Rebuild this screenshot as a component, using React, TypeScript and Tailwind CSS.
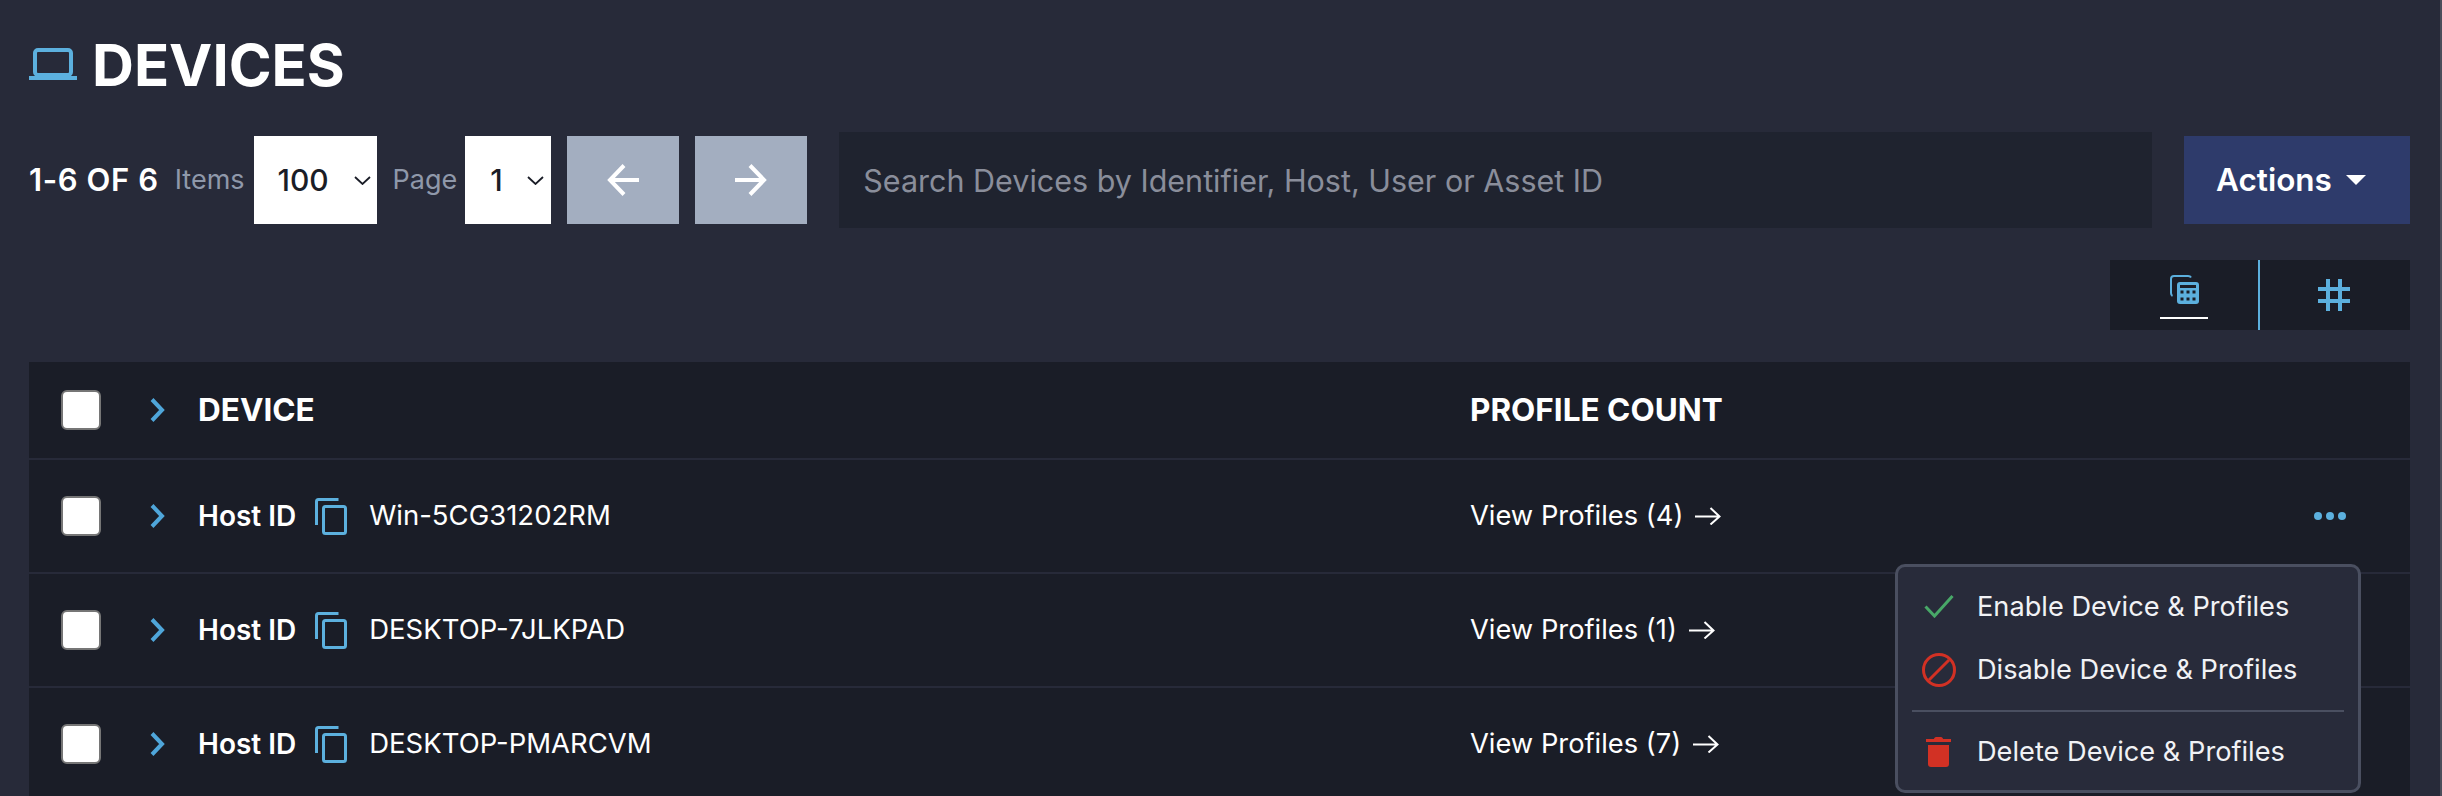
import { useState } from "react"

const devices = [
  { id: "Win-5CG31202RM", profiles: 4 },
  { id: "DESKTOP-7JLKPAD", profiles: 1 },
  { id: "DESKTOP-PMARCVM", profiles: 7 },
]

function Laptop() {
  return (
    <svg width="48" height="32" viewBox="0 0 48 32" className="shrink-0 text-[#5cb0de]">
      <rect x="6" y="2" width="36" height="25" rx="3" fill="none" stroke="currentColor" strokeWidth="4" />
      <rect x="0" y="28" width="48" height="4" fill="currentColor" />
    </svg>
  )
}

function SelectChevron() {
  return (
    <svg width="17" height="9" viewBox="0 0 17 9" className="shrink-0">
      <path d="M1 1l7.500 7 7.500-7" fill="none" stroke="#1a1d27" strokeWidth="1.800" />
    </svg>
  )
}

function BigArrow({ flip }: { flip?: boolean }) {
  return (
    <svg width="32" height="32" viewBox="0 0 32 32" className={flip ? "-scale-x-100" : ""}>
      <path d="M32 16H3M17 1.500L3 16l14 14.500" fill="none" stroke="#fff" strokeWidth="4" />
    </svg>
  )
}

function CalcIcon() {
  return (
    <svg width="29" height="29" viewBox="0 0 29 29" className="text-[#5cb0de]">
      <path d="M21 2.500C20.500 1.500 19.500 1 18 1H4C2 1 1 2 1 4v14c0 1.500.5 2.500 1.500 3" fill="none" stroke="currentColor" strokeWidth="2" />
      <rect x="7" y="7" width="22" height="22" rx="3" fill="currentColor" />
      <rect x="10" y="10" width="16" height="3" fill="#1a1d27" />
      <g fill="#1a1d27">
        <rect x="10.500" y="15.500" width="3" height="3" />
        <rect x="16.500" y="15.500" width="3" height="3" />
        <rect x="22.500" y="15.500" width="3" height="3" />
        <rect x="10.500" y="22.500" width="3" height="3" />
        <rect x="16.500" y="22.500" width="3" height="3" />
        <rect x="22.500" y="22.500" width="3" height="3" />
      </g>
    </svg>
  )
}

function HashIcon() {
  return (
    <svg width="32" height="32" viewBox="0 0 32 32" fill="#5cb0de">
      <rect x="8" y="0" width="4" height="32" />
      <rect x="20" y="0" width="4" height="32" />
      <rect x="0" y="8" width="32" height="4" />
      <rect x="0" y="20" width="32" height="4" />
    </svg>
  )
}

function Chevron() {
  return (
    <svg width="15" height="24" viewBox="0 0 15 24" className="shrink-0">
      <path d="M2 1.500L12 12 2 22.500" fill="none" stroke="#4fa6da" strokeWidth="4" />
    </svg>
  )
}

function CopyIcon() {
  return (
    <svg width="32" height="37" viewBox="0 0 32 37" className="shrink-0 text-[#5cb0de]">
      <path d="M23.500 1.500H3.500c-1.200 0-2 .8-2 2V27" fill="none" stroke="currentColor" strokeWidth="3" />
      <rect x="8.500" y="8.500" width="22" height="27" rx="2" fill="none" stroke="currentColor" strokeWidth="3" />
    </svg>
  )
}

function SmallArrow() {
  return (
    <svg width="26" height="18" viewBox="0 0 26 18" className="shrink-0">
      <path d="M0 9.500H24.500M15.500 1l9 8.500-9 8" fill="none" stroke="#fff" strokeWidth="2" />
    </svg>
  )
}

function Checkbox() {
  return <span className="block h-[40px] w-[40px] rounded-[6px] border-2 border-[#767676] bg-white" />
}

function RowMenu() {
  return (
    <div className="absolute left-[1895px] top-[564px] h-[229px] w-[466px] rounded-[10px] border-[3px] border-[#4a4f60] bg-[#282b3a] pt-[8px] text-[27.200px] leading-none text-[#f1f2f5]">
      <div className="flex h-[63px] items-center">
        <span className="flex w-[79px] shrink-0 justify-center pl-[2px]">
          <svg width="30" height="23" viewBox="0 0 30 23">
            <path d="M1.500 11.500l9 9.500L28.500 1" fill="none" stroke="#48a868" strokeWidth="3" />
          </svg>
        </span>
        <span>Enable Device &amp; Profiles</span>
      </div>
      <div className="flex h-[63px] items-center">
        <span className="flex w-[79px] shrink-0 justify-center pl-[2px]">
          <svg width="34" height="34" viewBox="0 0 34 34" fill="none" stroke="#d23124" strokeWidth="3">
            <circle cx="17" cy="17" r="15.500" />
            <path d="M7 27L27 7" />
          </svg>
        </span>
        <span>Disable Device &amp; Profiles</span>
      </div>
      <div className="mx-[14px] mt-[9px] h-[2px] bg-[#4a4f60]" />
      <div className="flex h-[78px] items-center pt-[2px]">
        <span className="flex w-[79px] shrink-0 justify-center pl-[2px]">
          <svg width="25" height="30" viewBox="0 0 25 30" fill="#d23124">
            <path d="M8 2c0-1 1-2 2-2h5c1 0 2 1 2 2h8v3H0V2z" />
            <path d="M2 8h21v19c0 2-1 3-3 3H5c-2 0-3-1-3-3z" />
          </svg>
        </span>
        <span>Delete Device &amp; Profiles</span>
      </div>
    </div>
  )
}

export default function App() {
  const [query, setQuery] = useState("")

  return (
    <div className="relative flex h-[796px] flex-col overflow-hidden border-r-2 border-[#4a4d5a] bg-[#272a39] pl-[29px] pr-[30px] pt-[28px] font-['Inter',sans-serif] text-white">
      <div className="flex h-[72px] items-center gap-[15px]">
        <Laptop />
        <h1 className="pt-[2px] text-[58px] font-bold leading-none">DEVICES</h1>
      </div>

      <div className="mt-[32px] flex h-[96px] items-center">
        <span className="text-[31px] font-semibold tracking-[0.6px]">1-6 OF 6</span>
        <span className="ml-[16px] text-[27px] text-[#8f98aa]">Items</span>
        <div className="ml-[9px] flex h-[88px] w-[123px] items-center justify-between bg-white pl-[24px] pr-[6px] text-[30px] font-medium text-[#1a1d27]">
          100
          <SelectChevron />
        </div>
        <span className="ml-[16px] text-[27px] text-[#8f98aa]">Page</span>
        <div className="ml-[8px] flex h-[88px] w-[86px] items-center justify-between bg-white pl-[25px] pr-[7px] text-[30px] font-medium text-[#1a1d27]">
          1
          <SelectChevron />
        </div>
        <button className="ml-[16px] flex h-[88px] w-[112px] items-center justify-center bg-[#a3aec0]">
          <BigArrow />
        </button>
        <button className="ml-[16px] flex h-[88px] w-[112px] items-center justify-center bg-[#a3aec0]">
          <BigArrow flip />
        </button>
        <input
          value={query}
          onChange={(e) => setQuery(e.target.value)}
          placeholder="Search Devices by Identifier, Host, User or Asset ID"
          className="ml-[32px] h-[96px] min-w-0 flex-1 bg-[#1f232f] px-[24px] text-[30.500px] text-white outline-none placeholder:text-[#8a8e9b]"
        />
        <button className="ml-[32px] flex h-[88px] w-[226px] items-center gap-[14px] bg-[#2e3b6b] pl-[32px] text-[31.500px] font-semibold">
          Actions
          <span className="h-0 w-0 border-x-[10px] border-t-[10px] border-x-transparent border-t-white" />
        </button>
      </div>

      <div className="mt-[32px] flex justify-end">
        <div className="flex h-[70px] w-[300px] bg-[#1a1d27]">
          <div className="relative flex w-[148px] justify-center pt-[15px]">
            <CalcIcon />
            <span className="absolute left-[50px] top-[57px] h-[2px] w-[48px] bg-white" />
          </div>
          <div className="w-[2px] bg-[#5cb0de]" />
          <div className="flex flex-1 items-center justify-center pr-[2px]">
            <HashIcon />
          </div>
        </div>
      </div>

      <div className="mt-[32px] min-h-0 flex-1 bg-[#1a1d27]">
        <div className="grid h-[98px] grid-cols-[169px_1272px_1fr] items-center border-b-2 border-[#272a39]">
          <div className="flex items-center pl-[32px]">
            <Checkbox />
            <span className="ml-[49px]">
              <Chevron />
            </span>
          </div>
          <div className="text-[31.500px] font-bold">DEVICE</div>
          <div className="text-[31.500px] font-bold">PROFILE COUNT</div>
        </div>

        {devices.map((d) => (
          <div key={d.id} className="grid h-[114px] grid-cols-[169px_1272px_1fr] items-center border-b-2 border-[#272a39]">
            <div className="flex items-center pl-[32px]">
              <Checkbox />
              <span className="ml-[49px]">
                <Chevron />
              </span>
            </div>
            <div className="flex items-center">
              <span className="text-[28px] font-semibold">Host ID</span>
              <span className="ml-[19px]">
                <CopyIcon />
              </span>
              <span className="ml-[22px] text-[27.500px]">{d.id}</span>
            </div>
            <div className="flex items-center justify-between pr-[64px]">
              <span className="flex items-center gap-[12px] text-[27.300px]">
                View Profiles ({d.profiles})
                <SmallArrow />
              </span>
              {d.profiles === 4 && (
                <span className="flex gap-[4px]">
                  <span className="h-[8px] w-[8px] rounded-full bg-[#5cb0de]" />
                  <span className="h-[8px] w-[8px] rounded-full bg-[#5cb0de]" />
                  <span className="h-[8px] w-[8px] rounded-full bg-[#5cb0de]" />
                </span>
              )}
            </div>
          </div>
        ))}
      </div>

      <RowMenu />
    </div>
  )
}
